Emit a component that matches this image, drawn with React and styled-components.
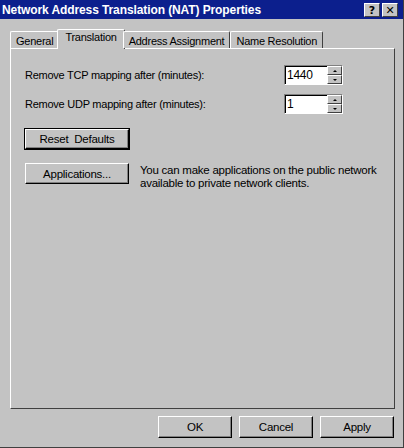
import React from "react";
import styled, { createGlobalStyle } from "styled-components";

const GlobalStyle = createGlobalStyle`
  html, body {
    margin: 0;
    padding: 0;
    background: #c0c0c0;
  }
  body {
    font-family: "Liberation Sans", Arial, sans-serif;
    font-size: 11px;
    letter-spacing: -0.25px;
    color: #000;
  }
`;

const Window = styled.div`
  width: 404px;
  height: 448px;
  box-sizing: border-box;
  background: #c3c3c3;
  border-right: 1px solid #404040;
  border-bottom: 1px solid #404040;
  display: flex;
  flex-direction: column;
`;

const TitleBar = styled.div`
  height: 19px;
  background: #0c1f8d;
  display: flex;
  align-items: center;
  justify-content: space-between;
  padding: 0 5px 0 2px;
`;

const Title = styled.div`
  color: #fff;
  font-family: "Liberation Sans", Arial, sans-serif;
  font-weight: bold;
  font-size: 12px;
  letter-spacing: -0.1px;
`;

const Caps = styled.div`
  display: flex;
  gap: 2px;
  margin-top: 1px;
`;

const CapButton = styled.div`
  width: 16px;
  height: 14px;
  box-sizing: border-box;
  background: #c3c3c3;
  border-top: 1px solid #fff;
  border-left: 1px solid #fff;
  border-right: 1px solid #404040;
  border-bottom: 1px solid #404040;
  display: flex;
  align-items: center;
  justify-content: center;
  font-family: "DejaVu Sans", sans-serif;
  font-weight: bold;
  font-size: 11px;
  letter-spacing: 0;
  line-height: 1;
`;

const Body = styled.div`
  flex: 1;
  display: flex;
  flex-direction: column;
  padding: 10px 8px 9px 10px;
`;

const TabRow = styled.div`
  display: flex;
  align-items: flex-end;
  height: 19px;
  position: relative;
  z-index: 1;
`;

const Tab = styled.div`
  box-sizing: border-box;
  height: ${({ active }) => (active ? "20px" : "17px")};
  margin: ${({ active }) => (active ? "0 -2px -1px -2px" : "0")};
  padding: ${({ active }) => (active ? "1px 7px 0 7px" : "1px 5px 0 5px")};
  background: #c3c3c3;
  border-top: 1px solid #fff;
  border-left: 1px solid #fff;
  border-right: 1px solid #404040;
  border-top-left-radius: 2px;
  border-top-right-radius: 2px;
  display: flex;
  align-items: ${({ active }) => (active ? "flex-start" : "center")};
  white-space: nowrap;
`;

const Panel = styled.div`
  flex: 1;
  box-sizing: border-box;
  border-top: 1px solid #fff;
  border-left: 1px solid #fff;
  border-right: 1px solid #404040;
  border-bottom: 1px solid #404040;
  padding: 16px 14px 0 14px;
  display: flex;
  flex-direction: column;
`;

const Row = styled.div`
  display: flex;
  align-items: center;
  justify-content: space-between;
  width: 318px;
  margin-bottom: 9px;
`;

const Spin = styled.div`
  display: flex;
  align-items: stretch;
  width: 59px;
  height: 20px;
  box-sizing: border-box;
  background: #fff;
  border-top: 1px solid #808080;
  border-left: 1px solid #808080;
  border-right: 1px solid #fff;
  border-bottom: 1px solid #fff;
  box-shadow: inset 1px 1px 0 #000;
`;

const SpinValue = styled.div`
  flex: 1;
  padding: 2px 0 0 2px;
  font-size: 12px;
`;

const Arrows = styled.div`
  width: 15px;
  display: flex;
  flex-direction: column;
  background: #c3c3c3;
`;

const Arrow = styled.div`
  flex: 1;
  box-sizing: border-box;
  border-top: 1px solid #fff;
  border-left: 1px solid #fff;
  border-right: 1px solid #404040;
  border-bottom: 1px solid #404040;
  display: flex;
  align-items: center;
  justify-content: center;
  &::after {
    content: "";
    border-left: 2px solid transparent;
    border-right: 2px solid transparent;
    ${({ down }) =>
      down ? "border-top: 2px solid #000;" : "border-bottom: 2px solid #000;"}
  }
`;

const Button = styled.div`
  width: ${({ w }) => w || 104}px;
  height: ${({ h }) => h || 21}px;
  box-sizing: border-box;
  background: #c3c3c3;
  border-top: 1px solid #fff;
  border-left: 1px solid #fff;
  border-right: 1px solid #000;
  border-bottom: 1px solid #000;
  box-shadow: ${({ defaultBtn }) =>
    defaultBtn
      ? "0 0 0 1px #000, inset -1px -1px 0 #808080"
      : "inset -1px -1px 0 #808080"};
  display: flex;
  align-items: center;
  justify-content: center;
  font-size: 11.5px;
  flex-shrink: 0;
`;

const ResetWrap = styled.div`
  margin: 6px 0 14px 0;
`;

const AppRow = styled.div`
  display: flex;
  gap: 11px;
  align-items: flex-start;
`;

const Note = styled.div`
  line-height: 13px;
  font-size: 11.5px;
  margin-top: 1px;
  white-space: nowrap;
`;

const Footer = styled.div`
  display: flex;
  justify-content: flex-end;
  gap: 7px;
  padding-top: 7px;
  padding-right: 1px;
`;

const tabs = ["General", "Translation", "Address Assignment", "Name Resolution"];

const Spinner = ({ value }) => (
  <Spin>
    <SpinValue>{value}</SpinValue>
    <Arrows>
      <Arrow />
      <Arrow down />
    </Arrows>
  </Spin>
);

export default function App() {
  return (
    <>
      <GlobalStyle />
      <Window>
        <TitleBar>
          <Title>Network Address Translation (NAT) Properties</Title>
          <Caps>
            <CapButton>?</CapButton>
            <CapButton>✕</CapButton>
          </Caps>
        </TitleBar>
        <Body>
          <TabRow>
            {tabs.map((t) => (
              <Tab key={t} active={t === "Translation"}>
                {t}
              </Tab>
            ))}
          </TabRow>
          <Panel>
            <Row>
              <span>Remove TCP mapping after (minutes):</span>
              <Spinner value="1440" />
            </Row>
            <Row>
              <span>Remove UDP mapping after (minutes):</span>
              <Spinner value="1" />
            </Row>
            <ResetWrap>
              <Button defaultBtn h={20}>Reset&nbsp; Defaults</Button>
            </ResetWrap>
            <AppRow>
              <Button>Applications...</Button>
              <Note>
                You can make applications on the public network
                <br />
                available to private network clients.
              </Note>
            </AppRow>
          </Panel>
          <Footer>
            <Button w={74} h={22}>OK</Button>
            <Button w={74} h={22}>Cancel</Button>
            <Button w={74} h={22}>Apply</Button>
          </Footer>
        </Body>
      </Window>
    </>
  );
}
